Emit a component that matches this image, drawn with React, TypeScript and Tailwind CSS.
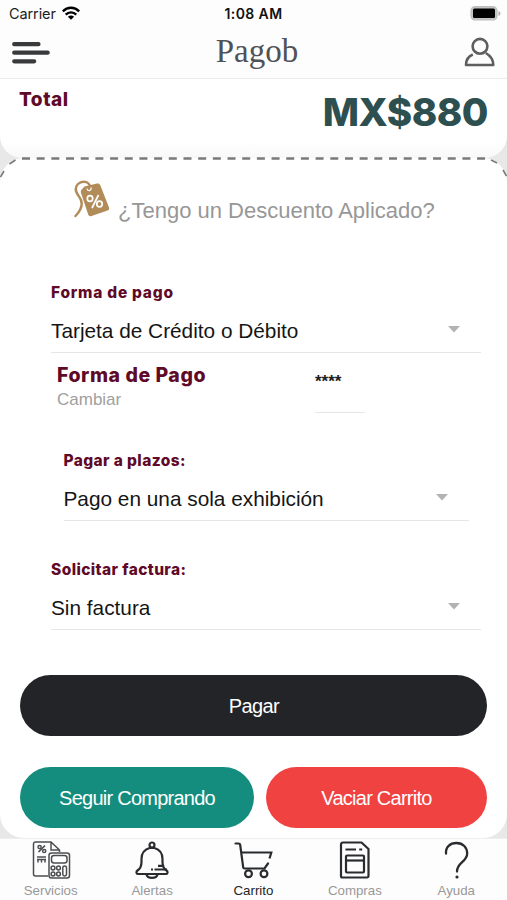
import type { ReactNode } from 'react'

type FieldProps = {
    label: string
    value: string
    className?: string
    labelClassName?: string
}

const Field = ({ label, value, className = '', labelClassName = 'tracking-[0.4px]' }: FieldProps) => {
    return (
        <div className={`border-b border-[#e6e6e6] ${className}`}>
            <div className={`h-6 font-['Inter'] text-[15.5px] leading-6 font-extrabold text-[#5f0a28] ${labelClassName}`}>{label}</div>
            <div className="mt-3 flex h-[35px] items-start justify-between pr-[21px]">
                <span className="text-[20.8px] leading-7 whitespace-nowrap text-[#151515]">{value}</span>
                <svg className="mt-[9px]" width="12" height="7" viewBox="0 0 12 7">
                    <path d="M0 0h12L6 6.5z" fill="#b2b2b2" />
                </svg>
            </div>
        </div>
    )
}

const Tab = ({ label, active, children }: { label: string; active?: boolean; children: ReactNode }) => {
    return (
        <div className="flex w-[101.4px] flex-col items-center">
            <div className="h-11 pt-[2px]">{children}</div>
            <span className={`text-[13.3px] leading-4 ${active ? 'text-[#252525]' : 'text-[#999]'}`}>{label}</span>
        </div>
    )
}

const ServicesIcon = () => (
    <svg width="40" height="40" viewBox="0 0 40 40" fill="none" stroke="#4b4d50" strokeWidth="1.5">
        <path d="M17 35H4.500a2 2 0 0 1-2-2V3a2 2 0 0 1 2-2H20l8.500 8V11M20 1V9h8.500" />
        <path d="M7.500 11l6.500-6.500" strokeWidth="1.700" />
        <circle cx="8.600" cy="6" r="1.600" />
        <circle cx="13.200" cy="10" r="1.600" />
        <path d="M6 16h9M7 21.500v-3.500M10.500 21.500v-3.500M14 21.500v-3.500M6 18.500h9" strokeWidth="1.500" />
        <rect x="18" y="12" width="20.500" height="25" rx="2.500" fill="white" />
        <rect x="20.500" y="14.500" width="15.500" height="7.500" rx="2.500" />
        <circle cx="22" cy="27" r="1.900" />
        <circle cx="27.500" cy="27" r="1.900" />
        <circle cx="22" cy="33" r="1.900" />
        <circle cx="27.500" cy="33" r="1.900" />
        <rect x="31.800" y="25" width="3.700" height="10" rx="1.700" />
    </svg>
)

const BellIcon = () => (
    <svg width="36" height="40" viewBox="0 0 36 40" fill="none" stroke="#292b2e" strokeWidth="2.200" strokeLinejoin="round">
        <circle cx="18" cy="4" r="2.500" />
        <path d="M15.500 7C10.500 8.500 7.500 12.500 7.500 18v3c0 4-1 6.500-4 8.500-1.500 1-1.500 3.500.5 3.500h28c2 0 2-2.500.5-3.500-3-2-4-4.500-4-8.500v-3c0-5.500-3-9.500-8-11z" />
        <path d="M12.500 33.500c1 4.500 10 4.500 11 0" />
        <path d="M17 28.500h2M20.500 28.500H33M24 24.800h5" />
    </svg>
)

const CartIcon = () => (
    <svg width="40" height="40" viewBox="0 0 40 40" fill="none" stroke="#292b2e" strokeWidth="2.200">
        <path d="M2.500 2.500h3c1 0 1.600.5 1.700 1.500l3 22.300c.1.700.6 1.200 1.300 1.200H31.500l3.500-5" strokeLinecap="round" />
        <path d="M8.300 11.500H38.300l-1.800 6" />
        <circle cx="15.500" cy="32.800" r="3.400" />
        <circle cx="31" cy="32.800" r="3.400" />
    </svg>
)

const ReceiptIcon = () => (
    <svg width="32" height="40" viewBox="0 0 32 40" fill="none" stroke="#292b2e" strokeWidth="2.200" strokeLinejoin="round">
        <path d="M4 1.500h18.500l7 6.500V35a1.500 1.500 0 0 1-1.500 1.500H3.500A1.500 1.500 0 0 1 2 35V3.500a2 2 0 0 1 2-2z" />
        <path d="M6.500 8.500h10.500M20.200 8.500h3" />
        <rect x="7" y="14.500" width="18" height="17" rx="1" />
        <path d="M7 19.500h18" />
    </svg>
)

const QuestionIcon = () => (
    <svg width="30" height="40" viewBox="0 0 30 40" fill="none" stroke="#292b2e" strokeWidth="2.300" strokeLinecap="round">
        <path d="M5 12.500C4.500 6 9 2 15.500 2s10.700 4.500 10.700 10.500c0 8.500-10.500 9-10.200 18" />
        <circle cx="16" cy="36" r="1.600" fill="#292b2e" stroke="none" />
    </svg>
)

const Header = () => {
    return (
        <header className="h-[79px] border-b border-[#ebebeb] bg-[#fdfdfd]">
            <div className="grid h-7 grid-cols-3 items-center pr-[6px] pl-[9px] font-['Inter'] text-[14.5px] leading-7 text-[#1c1c1c]">
                <div className="flex items-center gap-[6px]">
                    <span className="tracking-[-0.1px]">Carrier</span>
                    <svg className="-mt-[2px]" width="18" height="14" viewBox="0 0 18 14" fill="none" stroke="black" strokeWidth="2.400">
                        <path d="M.8 5.300c4.700-4.700 11.700-4.700 16.400 0" />
                        <path d="M3.700 8.600c3-3 7.600-3 10.600 0" />
                        <path d="M5.900 10.700c1.800-1.600 4.400-1.600 6.200 0L9 13.800z" fill="black" stroke="none" />
                    </svg>
                </div>
                <span className="-ml-[3px] text-center text-[14px] font-semibold tracking-[0.4px] text-[#111]">1:08 AM</span>
                <svg className="-mt-[2px] justify-self-end" width="31" height="15" viewBox="0 0 31 15">
                    <rect x="1" y=".7" width="26" height="13.300" rx="4" fill="#c4c4c4" stroke="#bdbdbd" strokeWidth="1.200" />
                    <rect x="3" y="2.600" width="22" height="9.500" rx="1.500" fill="black" />
                    <path d="M28.500 5c2.500 1 2.500 4 0 5z" fill="#aaa" />
                </svg>
            </div>
            <div className="flex h-[50px] justify-between px-[12px]">
                <svg className="mt-[13px]" width="38" height="24" viewBox="0 0 38 24" stroke="#393a3c" strokeWidth="4.200" strokeLinecap="round">
                    <path d="M2.200 3.200h24.300M2.200 11.700h33.500M2.200 20.300h20" />
                </svg>
                <h1 className="ml-[1px] font-['Liberation_Serif'] text-[33px] leading-[46px] text-[#505257]">Pagob</h1>
                <svg className="mt-[9px]" width="32" height="31" viewBox="0 0 32 31" fill="none" stroke="#5e5e5e" strokeWidth="2.600" strokeLinejoin="round">
                    <circle cx="17" cy="9.300" r="7.400" />
                    <path d="M9.800 17.500C5 19.500 3 23 3 28h27.300c0-5.500-2.500-9-7.500-12" />
                </svg>
            </div>
        </header>
    )
}

export default function App() {
    return (
        <div className="flex h-[900px] w-[507px] flex-col overflow-hidden bg-[#e8e8e8] font-['Liberation_Sans',sans-serif]">
            <Header />

            <section className="flex h-[79px] justify-between rounded-b-[22px] bg-linear-to-b from-white from-80% to-[#f8f8f8] px-[19px]">
                <span className="mt-[7px] font-['Inter'] text-[19px] leading-7 font-extrabold tracking-[0.5px] text-[#5f0a28]">Total</span>
                <span className="mt-[9px] font-['Inter'] text-[38.5px] leading-[48px] font-extrabold tracking-[-0.5px] text-[#2d4f50]">MX$880</span>
            </section>

            <main className="relative h-[680px] rounded-[24px] bg-white px-[20px]">
                <svg className="absolute top-[-1px] left-0" width="507" height="26" viewBox="0 0 507 26" fill="none" stroke="#7a7a7a" strokeWidth="2.300">
                    <path d="M22 1.500H486" strokeDasharray="8 6.680" />
                    <path d="M15.500 3l-6 4M491 3l6 3M4 14l-3.500 6M503 13l3.500 6" strokeWidth="1.600" />
                </svg>

                <div className="flex h-[124px] items-start pl-[53px]">
                    <svg className="mt-[22px] shrink-0" width="37" height="38" viewBox="0 0 37 38" fill="none" stroke="#b28c58">
                        <path d="M17.500 7.500C16 1 9 .2 5 4c-4 4-2.500 8 1 12.500 4 5 4 11.500-3.500 19.500" strokeWidth="2.400" strokeLinecap="round" />
                        <path d="M11.500 6.500L24 3.500c1.500-.3 2.500.2 3.300 1.700L36 27.500c.5 1.500 0 2.500-1.500 3L18.500 36c-1.500.5-2.800 0-3.300-1.500L8 13c-.4-1.500-.2-2.500.7-3.600z" fill="#b28c58" stroke="none" />
                        <path d="M14 8.500c.5 3.500 4.800 2.500 4-1" stroke="white" strokeWidth="1.200" />
                        <g stroke="white" strokeWidth="1.700">
                            <ellipse cx="17" cy="18.500" rx="2.700" ry="2.900" />
                            <ellipse cx="26.500" cy="24" rx="2.700" ry="2.900" />
                            <path d="M25.500 15l-6.500 13" />
                        </g>
                    </svg>
                    <span className="mt-[37px] ml-[8px] text-[22px] leading-8 whitespace-nowrap text-[#979797]">¿Tengo un Descuento Aplicado?</span>
                </div>

                <Field className="-mt-[1px] mr-[6px] ml-[31px]" labelClassName="tracking-[0.75px]" label="Forma de pago" value="Tarjeta de Crédito o Débito" />

                <div className="flex h-24 pt-[8px] pl-[37px]">
                    <div className="w-[258px]">
                        <div className="font-['Inter'] text-[19.5px] leading-7 font-extrabold tracking-[0.55px] text-[#5f0a28]">Forma de Pago</div>
                        <div className="text-[17px] leading-[21px] text-[#a0a0a0]">Cambiar</div>
                    </div>
                    <div className="h-[52px] w-[50px] border-b border-[#e6e6e6] pt-[9px] text-[17px] leading-6 font-bold text-[#202020]">****</div>
                </div>

                <Field className="mr-[18px] ml-[43.5px]" label="Pagar a plazos:" value="Pago en una sola exhibición" />
                <Field className="mt-[37px] mr-[6px] ml-[31px]" label="Solicitar factura:" value="Sin factura" />

                <div className="mt-[45px] flex flex-col gap-[31px] text-[20px] tracking-[-0.75px] text-white">
                    <button className="h-[61px] rounded-full bg-[#222428] pl-px tracking-[-0.6px]">Pagar</button>
                    <div className="flex gap-3">
                        <button className="h-[61px] w-[234px] rounded-full bg-[#158d7e]">Seguir Comprando</button>
                        <button className="h-[61px] flex-1 rounded-full bg-[#f14242]">Vaciar Carrito</button>
                    </div>
                </div>
            </main>

            <nav className="flex h-[62px] border-t border-[#eee] bg-[#fdfdfd]">
                <Tab label="Servicios"><ServicesIcon /></Tab>
                <Tab label="Alertas"><BellIcon /></Tab>
                <Tab label="Carrito" active><CartIcon /></Tab>
                <Tab label="Compras"><ReceiptIcon /></Tab>
                <Tab label="Ayuda"><QuestionIcon /></Tab>
            </nav>
        </div>
    )
}
